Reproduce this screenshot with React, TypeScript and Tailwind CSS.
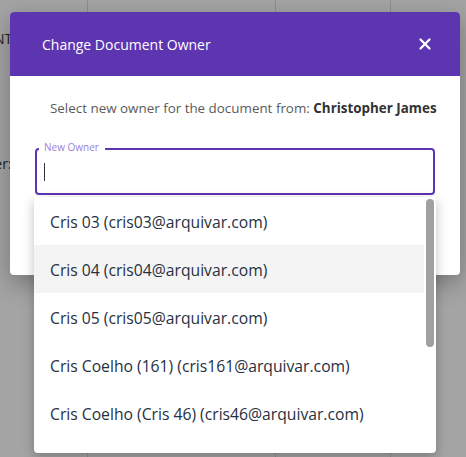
import { X } from 'lucide-react'

const OWNERS = [
  'Cris 03 (cris03@arquivar.com)',
  'Cris 04 (cris04@arquivar.com)',
  'Cris 05 (cris05@arquivar.com)',
  'Cris Coelho (161) (cris161@arquivar.com)',
  'Cris Coelho (Cris 46) (cris46@arquivar.com)',
]

export default function App() {
  return (
    <div
      className="relative w-[466px] h-[457px] overflow-hidden bg-[#a4a4a4]"
      style={{ fontFamily: '"Open Sans", "Noto Sans", sans-serif' }}
    >
      {/* page behind the backdrop */}
      <div className="flex h-full text-[14px] text-[#222]">
        <div className="w-[88px] border-r border-[#8e8e8e] pt-[28px]">
          <p className="-ml-[6px]">NT</p>
          <p className="mt-[104px] -ml-[36px]">Owner:</p>
        </div>
        <div className="w-[188px] border-r border-[#8e8e8e]" />
        <div className="w-[115px] border-r border-[#8e8e8e]" />
        <div className="flex-1" />
      </div>

      {/* dialog */}
      <div className="absolute left-[10px] top-[12px] w-[450px] rounded-[4px] bg-white shadow-[0_8px_24px_rgba(0,0,0,0.3)] overflow-hidden">
        <div className="h-[64px] bg-[#5e35b1] flex items-center justify-between pl-[32px] pr-[26px]">
          <h2 className="text-white text-[14px]">Change Document Owner</h2>
          <X className="w-[18px] h-[18px] text-white" strokeWidth={3} />
        </div>
        <div className="pl-[40px] pt-[22px] text-[13.4px] text-[#5a5a5a]">
          Select new owner for the document from:{' '}
          <span className="font-bold text-[#333]">Christopher James</span>
        </div>
        <div className="px-[25px] pt-[30px] pb-[80px]">
          <div className="relative h-[47px] rounded-[4px] border-2 border-[#5e35b1] flex items-center pl-[7px]">
            <span className="absolute -top-[10px] left-[2px] bg-white pl-[5px] pr-[6px] text-[10px] text-[#9c7fd8]">
              New Owner
            </span>
            <span className="w-px h-[18px] bg-[#333]" />
          </div>
        </div>
      </div>

      {/* owner menu */}
      <div className="absolute left-[34px] top-[197px] w-[402px] h-[256px] bg-white rounded-b-[4px] shadow-[0_4px_12px_rgba(0,0,0,0.25)] overflow-hidden">
        <div className="pr-[12px]">
          {OWNERS.map((o, i) => (
            <div
              key={o}
              className={`h-[48px] flex items-center pl-[16px] pt-[3px] text-[15.7px] text-[#263040] ${
                i === 1 ? 'bg-[#f4f4f4]' : ''
              }`}
            >
              {o}
            </div>
          ))}
        </div>
        <div className="absolute right-[2px] top-[2px] w-[8px] h-[148px] rounded-full bg-[#a0a0a0]" />
      </div>
    </div>
  )
}
